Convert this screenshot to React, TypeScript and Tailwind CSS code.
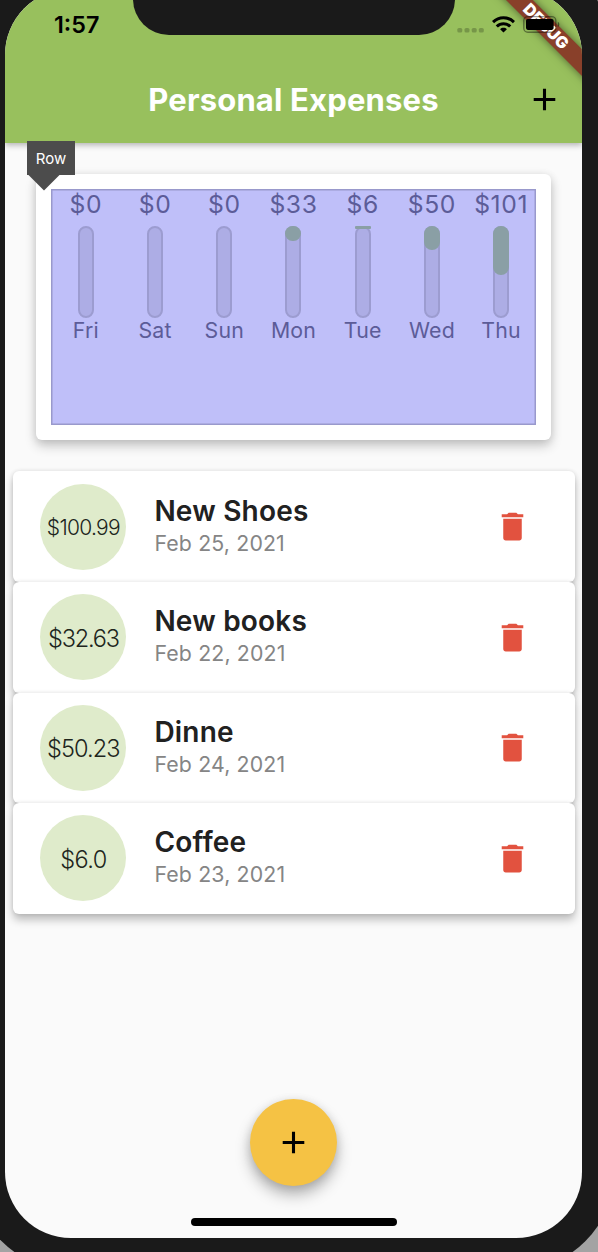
import type { ReactNode } from "react";

const days = [
  { day: "Fri", amount: "$0", fill: 0 },
  { day: "Sat", amount: "$0", fill: 0 },
  { day: "Sun", amount: "$0", fill: 0 },
  { day: "Mon", amount: "$33", fill: 15.5 },
  { day: "Tue", amount: "$6", fill: 3 },
  { day: "Wed", amount: "$50", fill: 24.3 },
  { day: "Thu", amount: "$101", fill: 49 },
];

const expenses = [
  { amount: "$100.99", title: "New Shoes", date: "Feb 25, 2021", size: "text-[21px] tracking-[-0.7px]" },
  { amount: "$32.63", title: "New books", date: "Feb 22, 2021", size: "text-[23.5px] tracking-[-1.2px]" },
  { amount: "$50.23", title: "Dinne", date: "Feb 24, 2021", size: "text-[23.5px] tracking-[-0.9px]" },
  { amount: "$6.0", title: "Coffee", date: "Feb 23, 2021", size: "text-[23.5px] tracking-[-0.6px]" },
];

function PlusIcon() {
  return (
    <svg width="37" height="37" viewBox="0 0 24 24" fill="#000">
      <path d="M19 13h-6v6h-2v-6H5v-2h6V5h2v6h6v2z" />
    </svg>
  );
}

function TrashIcon() {
  return (
    <svg width="37" height="37" viewBox="0 0 24 24" fill="#e2523f">
      <path d="M6 19.400c0 .9.7 1.600 1.600 1.600h8.800c.9 0 1.600-.7 1.600-1.600V7H6v12.400zM19 4h-3.500l-1-1h-5l-1 1H5v2h14V4z" />
    </svg>
  );
}

function StatusIcons() {
  return (
    <div className="absolute left-[452px] top-[25px] z-20 flex items-start">
      <svg width="27" height="20" viewBox="0 0 27 20" fill="#000" fillOpacity="0.22">
        <rect x="0.3" y="14" width="5" height="4.6" rx="1.6" />
        <rect x="7.5" y="14" width="5" height="4.6" rx="1.6" />
        <rect x="14.7" y="14" width="5" height="4.6" rx="1.6" />
        <rect x="21.8" y="14" width="5" height="4.6" rx="1.6" />
      </svg>
      <svg className="ml-2" width="23" height="20" viewBox="0 0 23 20" fill="none" stroke="#000" strokeWidth="3.1">
        <path d="M1 8.1C6.9 2.3 16.1 2.3 22 8.1" />
        <path d="M4.8 12.5C8.6 8.8 14.4 8.8 18.2 12.5" />
        <path d="M11.5 18.4L8.1 15.2C10 13.4 13 13.4 14.9 15.2Z" fill="#000" stroke="none" />
      </svg>
      <svg className="ml-2" width="38" height="24" viewBox="0 0 38 24">
        <rect x="0.8" y="2.6" width="32" height="15.6" rx="4" fill="none" stroke="#000" strokeOpacity="0.4" strokeWidth="1.4" />
        <rect x="3" y="4.9" width="27.6" height="11" rx="1.8" fill="#000" />
        <path d="M34.8 7.8c2 .8 2 4.400 0 5.200z" fill="#000" fillOpacity="0.45" />
      </svg>
    </div>
  );
}

function Header() {
  return (
    <header className="relative z-10 h-[153.500px] shrink-0 bg-[#98c05d] shadow-[0_2px_6px_rgba(0,0,0,0.3)]">
      <div className="absolute left-[128px] top-0 h-[46px] w-[322px] rounded-b-[36px] bg-[#1a1a1a]" />
      <div className="absolute -right-1 top-0 h-[150px] w-[120px] overflow-hidden">
        <div className="absolute left-[-20px] top-[27.700px] flex h-[18.500px] w-[200px] rotate-45 items-center justify-center bg-[#89402a] text-[16.300px] font-black leading-none text-white shadow-[0_0_9px_rgba(0,0,0,0.5)]">
          DEBUG
        </div>
      </div>
      <StatusIcons />
      <span className="absolute left-[49px] top-[22px] text-[23.300px] font-semibold leading-7 text-black">1:57</span>
      <div className="flex h-full items-end justify-center pb-[23px]">
        <h1 className="text-[31px] font-bold leading-[40px] tracking-[0.16px] text-white">Personal Expenses</h1>
      </div>
      <button className="absolute left-[521px] top-[92px]" aria-label="Add expense">
        <PlusIcon />
      </button>
    </header>
  );
}

function Tooltip({ children }: { children: ReactNode }) {
  return (
    <div className="absolute left-[-9px] top-[-33px] z-20">
      <div className="flex h-[34px] w-12 items-center justify-center bg-[#4c4c4c] pt-1 text-[15px] tracking-[0.1px] text-white">{children}</div>
      <svg className="ml-px block" width="32" height="16" viewBox="0 0 32 16">
        <path d="M0.500 0H31.500L16 15.500Z" fill="#4c4c4c" />
      </svg>
    </div>
  );
}

function WeekChart() {
  return (
    <section className="relative mx-[31px] mt-[31px] h-[266.500px] shrink-0 rounded-md bg-white p-[15.300px] shadow-[0_6px_12px_rgba(0,0,0,0.2),0_1px_8px_rgba(0,0,0,0.1)]">
      <Tooltip>Row</Tooltip>
      <div className="grid h-full grid-cols-7 bg-[#bfbff9] shadow-[inset_0_0_0_1.500px_#9999cc]">
        {days.map((d) => (
          <div key={d.day} className="flex flex-col items-center text-[#5c5c98]">
            <span className="h-[37px] whitespace-nowrap text-[24.700px] leading-[30px] tracking-[0.6px]">{d.amount}</span>
            <div className="h-[92px] w-4 shrink-0 rounded-full border-2 border-[#9c9cd0] bg-[#adade5]">
              {d.fill > 0 && (
                <div
                  className="-mx-0.5 -mt-0.5 bg-[#8a9fa5]"
                  style={{ height: d.fill, borderRadius: d.fill > 10 ? 8 : 1 }}
                />
              )}
            </div>
            <span className="text-[21.300px] leading-[25px] tracking-[0.2px]">{d.day}</span>
          </div>
        ))}
      </div>
    </section>
  );
}

function ExpenseCard({ amount, title, date, size }: (typeof expenses)[number]) {
  return (
    <li className="flex h-[110.600px] items-center rounded-md bg-white pl-[27.900px] pr-[43.500px] shadow-[0_6px_9px_rgba(0,0,0,0.24),0_0_4px_rgba(0,0,0,0.11)]">
      <div className={`flex h-[86px] w-[86px] items-center justify-center rounded-full bg-[#dfebcb] pt-[2px] font-light text-[#20251c] ${size}`}>
        {amount}
      </div>
      <div className="ml-[28px] flex-1">
        <div className="text-[28px] font-semibold leading-[33px] tracking-[0.2px] text-[#212121]">{title}</div>
        <div className="text-[21.300px] leading-[31px] tracking-[0.150px] text-[#858585]">{date}</div>
      </div>
      <button aria-label="Delete expense">
        <TrashIcon />
      </button>
    </li>
  );
}

export default function App() {
  return (
    <div className="h-[1252px] w-[598px] overflow-hidden bg-[#a3a3a3] font-['Inter',sans-serif]">
      <div className="-ml-[27px] -mt-[43px] h-[1313px] w-[641px] rounded-[98px] bg-[#1a1a1a] p-8">
        <main className="relative flex h-[1249px] w-[577px] flex-col overflow-hidden rounded-[66px] bg-[#fafafa]">
          <Header />
          <WeekChart />
          <ul className="mx-[7.500px] mt-[31.400px] flex flex-col">
            {expenses.map((e) => (
              <ExpenseCard key={e.title} {...e} />
            ))}
          </ul>
          <footer className="mt-auto flex flex-col items-center pb-[12px]">
            <button
              aria-label="New expense"
              className="mb-[32.300px] flex h-[86.400px] w-[86.400px] items-center justify-center rounded-full bg-[#f5c244] shadow-[0_9px_15px_rgba(0,0,0,0.28),0_2px_10px_rgba(0,0,0,0.12)]"
            >
              <PlusIcon />
            </button>
            <div className="h-2 w-[206px] rounded-full bg-black" />
          </footer>
        </main>
      </div>
    </div>
  );
}
